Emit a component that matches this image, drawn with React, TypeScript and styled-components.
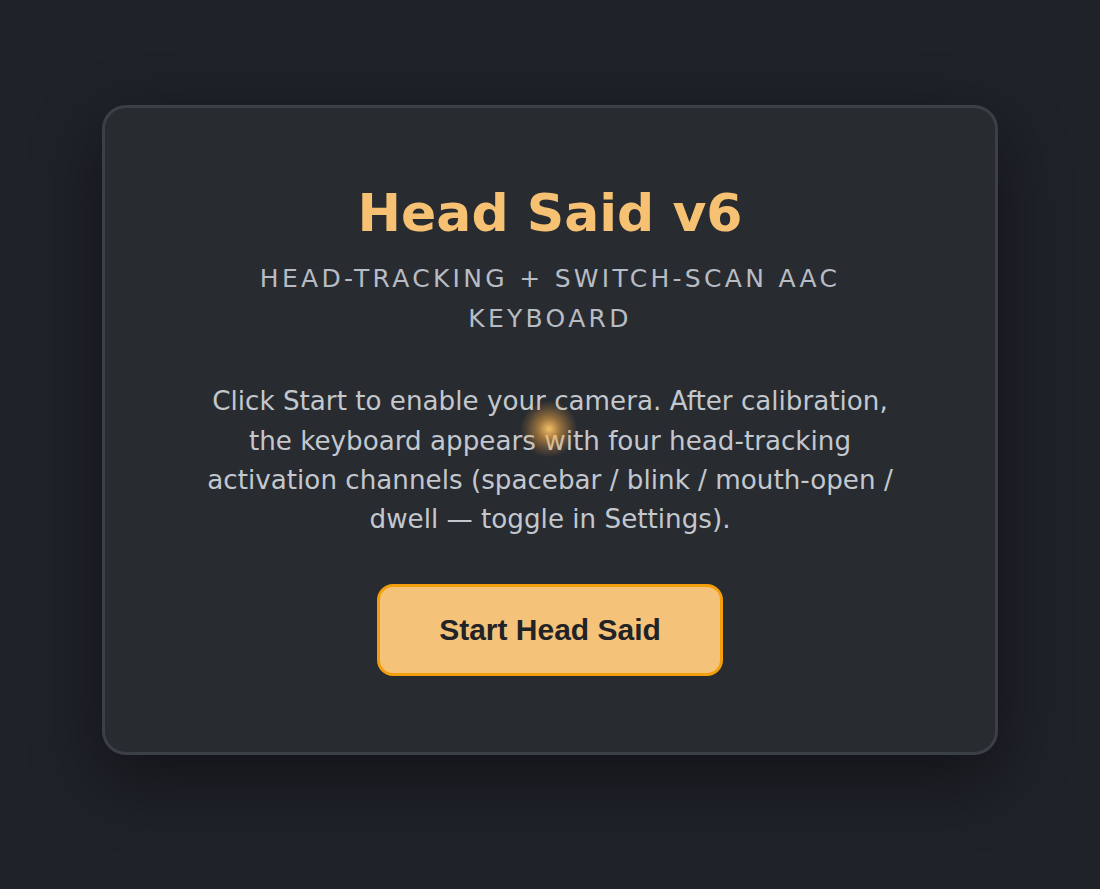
import React from "react";
import styled, { createGlobalStyle } from "styled-components";

const GlobalStyle = createGlobalStyle`
  html, body {
    margin: 0;
    padding: 0;
    background: #1f2229;
  }
  body {
    font-family: "DejaVu Sans", "Noto Sans", sans-serif;
  }
  * { box-sizing: border-box; }
`;

const Page = styled.main`
  min-height: 889px;
  display: flex;
  flex-direction: column;
  align-items: center;
  padding-top: 105px;
  background: #1f2229;
`;

const Card = styled.section`
  width: 896px;
  height: 650px;
  background: #282b30;
  border: 3px solid #3b3f46;
  border-radius: 24px;
  box-shadow: 0 24px 70px rgba(0, 0, 0, 0.45);
  padding: 74px 80px 72px;
  display: flex;
  flex-direction: column;
  align-items: center;
  text-align: center;
`;

const Title = styled.h1`
  margin: 0;
  font-family: "DejaVu Sans", sans-serif;
  font-weight: 700;
  font-size: 52px;
  line-height: 1.2;
  color: #f6c172;
`;

const Subtitle = styled.p`
  margin: 15px 0 0;
  font-family: "DejaVu Sans", sans-serif;
  font-size: 25px;
  line-height: 40px;
  letter-spacing: 3.3px;
  text-transform: uppercase;
  color: #b7bcc4;
`;

const Body = styled.p`
  margin: 43px 0 0;
  max-width: 700px;
  font-family: "DejaVu Sans", sans-serif;
  font-size: 26.2px;
  line-height: 39.3px;
  color: #c3c7ce;
`;

const StartButton = styled.button`
  margin-top: 44px;
  width: 346px;
  height: 92px;
  background: #f5c27a;
  border: 3px solid #f59e0b;
  border-radius: 16px;
  font-family: "Liberation Sans", Arial, sans-serif;
  font-weight: 700;
  font-size: 30px;
  color: #222326;
  cursor: pointer;
`;

const Glow = styled.div`
  position: absolute;
  left: 521px;
  top: 401px;
  width: 56px;
  height: 56px;
  border-radius: 50%;
  background: radial-gradient(
    circle,
    rgba(255, 198, 105, 0.95) 0%,
    rgba(245, 172, 72, 0.55) 28%,
    rgba(230, 160, 70, 0.2) 55%,
    rgba(230, 160, 70, 0) 72%
  );
  pointer-events: none;
`;

export default function App() {
  return (
    <>
      <GlobalStyle />
      <Page>
        <Card>
          <Title>Head Said v6</Title>
          <Subtitle>Head-tracking + switch-scan AAC keyboard</Subtitle>
          <Body>
            Click Start to enable your camera. After calibration, the keyboard
            appears with four head-tracking activation channels (spacebar /
            blink / mouth-open / dwell — toggle in Settings).
          </Body>
          <StartButton>Start Head Said</StartButton>
        </Card>
      </Page>
      <Glow />
    </>
  );
}
